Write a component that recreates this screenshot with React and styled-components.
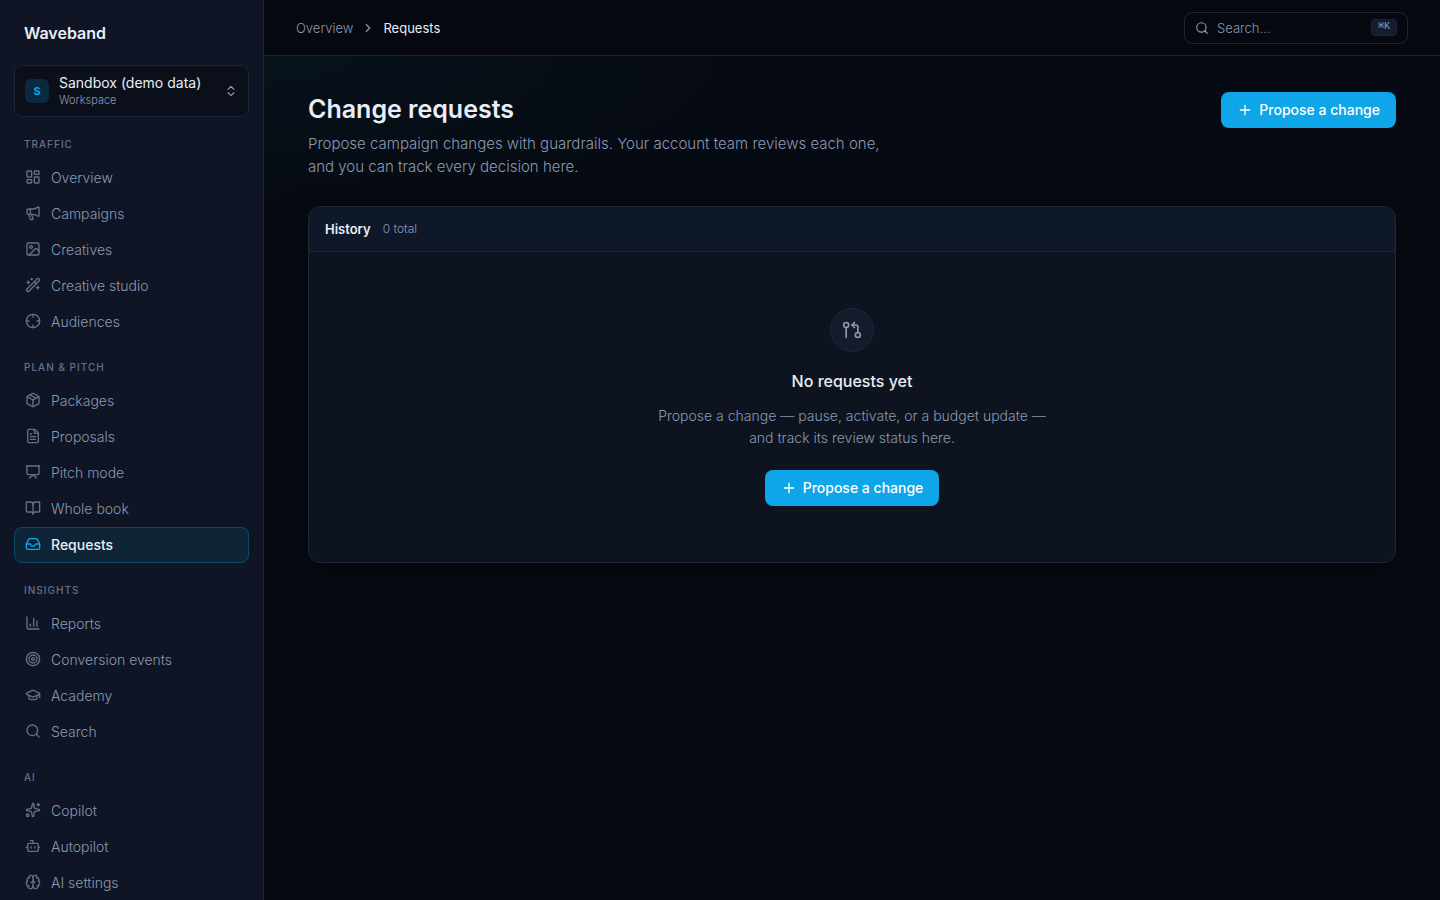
import styled, { createGlobalStyle } from "styled-components";
import {
  BookOpen,
  Bot,
  Brain,
  ChartColumn,
  ChevronRight,
  ChevronsUpDown,
  Crosshair,
  FileText,
  GitPullRequestArrow,
  GraduationCap,
  Image,
  Inbox,
  LayoutDashboard,
  Megaphone,
  Package,
  Plus,
  Presentation,
  Search,
  Sparkles,
  Target,
  WandSparkles,
} from "lucide-react";

const GlobalStyle = createGlobalStyle`
  :root {
    --bg: #060a12;
    --sidebar: #0f1524;
    --panel: #0d1420;
    --panel-header: #0f1828;
    --border: #1b2639;
    --text: #e8edf7;
    --muted: #8b99b3;
    --subtle: #64718a;
    --accent: #0ea5e9;
  }

  * {
    box-sizing: border-box;
  }

  body {
    margin: 0;
    background: var(--bg);
    color: var(--text);
    font-family: Inter, "Noto Sans", sans-serif;
    font-size: 14px;
    -webkit-font-smoothing: antialiased;
  }

  button,
  input {
    font: inherit;
    color: inherit;
  }

  h1, h2, h3, p, ul {
    margin: 0;
    padding: 0;
  }
`;

const Shell = styled.div`
  display: flex;
  height: 100vh;
  overflow: hidden;
`;

const Sidebar = styled.aside`
  flex: 0 0 264px;
  padding: 0 14px;
  overflow: hidden;
  background: var(--sidebar);
  border-right: 1px solid var(--border);
`;

const Brand = styled.div`
  padding: 21px 10px 20px;
  font-size: 16px;
  font-weight: 600;
  line-height: 24px;
`;

const WorkspaceButton = styled.button`
  display: flex;
  align-items: center;
  gap: 10px;
  width: 100%;
  height: 52px;
  padding: 0 10px;
  text-align: left;
  background: #0b0f1a;
  border: 1px solid var(--border);
  border-radius: 8px;
  cursor: pointer;

  svg {
    color: var(--muted);
  }
`;

const WorkspaceMark = styled.span`
  display: grid;
  place-items: center;
  width: 24px;
  height: 24px;
  border-radius: 6px;
  background: #0c2a3f;
  color: var(--accent);
  font-size: 11px;
  font-weight: 700;
`;

const WorkspaceText = styled.span`
  display: flex;
  flex: 1;
  flex-direction: column;
  font-size: 14px;
  line-height: 18px;
`;

const WorkspaceHint = styled.span`
  color: var(--muted);
  font-size: 11px;
  font-weight: 300;
  line-height: 16px;
`;

const GroupLabel = styled.h2`
  padding: 18px 10px 7px;
  color: var(--subtle);
  font-size: 10px;
  font-weight: 500;
  line-height: 18px;
  letter-spacing: 1px;
  text-transform: uppercase;
`;

const NavList = styled.ul`
  list-style: none;
`;

const NavLink = styled.a`
  display: flex;
  align-items: center;
  gap: 10px;
  height: 36px;
  padding: 0 10px 2px;
  border: 1px solid ${({ $active }) => ($active ? "#0c4a6b" : "transparent")};
  border-radius: 8px;
  background: ${({ $active }) => ($active ? "#0e2437" : "transparent")};
  color: ${({ $active }) => ($active ? "var(--text)" : "var(--muted)")};
  font-weight: ${({ $active }) => ($active ? 500 : 300)};
  text-decoration: none;

  svg {
    color: ${({ $active }) => ($active ? "var(--accent)" : "var(--subtle)")};
  }
`;

const Main = styled.div`
  display: flex;
  flex: 1;
  flex-direction: column;
  min-width: 0;
`;

const Topbar = styled.header`
  display: flex;
  align-items: center;
  justify-content: space-between;
  height: 56px;
  padding: 0 32px;
  background: #05080f;
  border-bottom: 1px solid var(--border);
`;

const Breadcrumbs = styled.nav`
  display: flex;
  align-items: center;
  gap: 8px;
  font-size: 13px;

  a {
    color: var(--muted);
    font-weight: 300;
    text-decoration: none;
  }

  svg {
    color: var(--muted);
  }
`;

const SearchBox = styled.label`
  display: flex;
  align-items: center;
  gap: 8px;
  width: 224px;
  height: 32px;
  padding: 0 10px;
  border: 1px solid var(--border);
  border-radius: 8px;
  color: var(--muted);
`;

const SearchInput = styled.input`
  flex: 1;
  min-width: 0;
  padding: 0;
  border: 0;
  outline: 0;
  background: transparent;
  font-size: 13px;
  font-weight: 300;

  &::placeholder {
    color: var(--muted);
    opacity: 1;
  }
`;

const Shortcut = styled.kbd`
  height: 17px;
  padding: 0 6px;
  border: 1px solid var(--border);
  border-radius: 4px;
  background: #141d30;
  font-family: "Liberation Mono", monospace;
  font-size: 10px;
  line-height: 14px;
`;

const Content = styled.main`
  flex: 1;
  padding: 36px 44px;
  background: radial-gradient(
    ellipse 500px 160px at 0 0,
    #07121b,
    transparent
  );
`;

const PageHeader = styled.div`
  display: flex;
  align-items: flex-start;
  justify-content: space-between;
  gap: 24px;
  margin-bottom: 28px;
`;

const Title = styled.h1`
  font-size: 25px;
  font-weight: 600;
  line-height: 34px;
`;

const Lead = styled.p`
  max-width: 600px;
  margin-top: 6px;
  color: var(--muted);
  font-size: 15px;
  font-weight: 300;
  line-height: 23px;
`;

const PrimaryButton = styled.button`
  display: inline-flex;
  align-items: center;
  gap: 6px;
  height: 36px;
  padding: 0 16px 1px;
  border: 0;
  border-radius: 8px;
  background: var(--accent);
  color: #fff;
  font-size: 14px;
  font-weight: 500;
  white-space: nowrap;
  cursor: pointer;
`;

const Card = styled.section`
  overflow: hidden;
  background: var(--panel);
  border: 1px solid var(--border);
  border-radius: 12px;
  box-shadow: 0 8px 32px rgba(0, 0, 0, 0.35);
`;

const CardHeader = styled.div`
  display: flex;
  align-items: center;
  gap: 12px;
  height: 45px;
  padding: 0 16px 1px;
  background: var(--panel-header);
  border-bottom: 1px solid var(--border);
`;

const CardTitle = styled.h2`
  font-size: 13px;
  font-weight: 600;
`;

const CardCount = styled.span`
  color: var(--muted);
  font-size: 12px;
  font-weight: 300;
`;

const EmptyState = styled.div`
  display: flex;
  flex-direction: column;
  align-items: center;
  padding: 56px 24px;
  text-align: center;
`;

const EmptyIcon = styled.div`
  display: grid;
  place-items: center;
  width: 44px;
  height: 44px;
  border: 1px solid var(--border);
  border-radius: 50%;
  background: #141b2b;
  color: var(--muted);
`;

const EmptyTitle = styled.h3`
  margin-top: 16px;
  font-size: 16px;
  font-weight: 500;
  line-height: 26px;
`;

const EmptyText = styled.p`
  max-width: 400px;
  margin: 11px 0 21px;
  color: var(--muted);
  font-size: 14px;
  font-weight: 300;
  line-height: 22px;
`;

const navGroups = [
  {
    label: "Traffic",
    items: [
      { name: "Overview", icon: LayoutDashboard },
      { name: "Campaigns", icon: Megaphone },
      { name: "Creatives", icon: Image },
      { name: "Creative studio", icon: WandSparkles },
      { name: "Audiences", icon: Crosshair },
    ],
  },
  {
    label: "Plan & pitch",
    items: [
      { name: "Packages", icon: Package },
      { name: "Proposals", icon: FileText },
      { name: "Pitch mode", icon: Presentation },
      { name: "Whole book", icon: BookOpen },
      { name: "Requests", icon: Inbox },
    ],
  },
  {
    label: "Insights",
    items: [
      { name: "Reports", icon: ChartColumn },
      { name: "Conversion events", icon: Target },
      { name: "Academy", icon: GraduationCap },
      { name: "Search", icon: Search },
    ],
  },
  {
    label: "AI",
    items: [
      { name: "Copilot", icon: Sparkles },
      { name: "Autopilot", icon: Bot },
      { name: "AI settings", icon: Brain },
    ],
  },
];

const ProposeButton = () => (
  <PrimaryButton type="button">
    <Plus size={16} strokeWidth={2} />
    Propose a change
  </PrimaryButton>
);

const SideNav = ({ current }) => (
  <nav aria-label="Main">
    {navGroups.map(({ label, items }) => (
      <section key={label}>
        <GroupLabel>{label}</GroupLabel>
        <NavList>
          {items.map(({ name, icon: Icon }) => (
            <li key={name}>
              <NavLink
                href="#"
                $active={name === current}
                aria-current={name === current ? "page" : undefined}
              >
                <Icon size={16} strokeWidth={2} />
                {name}
              </NavLink>
            </li>
          ))}
        </NavList>
      </section>
    ))}
  </nav>
);

const App = () => {
  return (
    <>
      <GlobalStyle />
      <Shell>
        <Sidebar>
          <Brand>Waveband</Brand>
          <WorkspaceButton type="button">
            <WorkspaceMark>S</WorkspaceMark>
            <WorkspaceText>
              Sandbox (demo data)
              <WorkspaceHint>Workspace</WorkspaceHint>
            </WorkspaceText>
            <ChevronsUpDown size={14} />
          </WorkspaceButton>
          <SideNav current="Requests" />
        </Sidebar>
        <Main>
          <Topbar>
            <Breadcrumbs aria-label="Breadcrumb">
              <a href="#">Overview</a>
              <ChevronRight size={14} />
              <span aria-current="page">Requests</span>
            </Breadcrumbs>
            <SearchBox>
              <Search size={14} />
              <SearchInput type="search" placeholder="Search…" aria-label="Search" />
              <Shortcut>⌘K</Shortcut>
            </SearchBox>
          </Topbar>
          <Content>
            <PageHeader>
              <div>
                <Title>Change requests</Title>
                <Lead>
                  Propose campaign changes with guardrails. Your account team
                  reviews each one, and you can track every decision here.
                </Lead>
              </div>
              <ProposeButton />
            </PageHeader>
            <Card>
              <CardHeader>
                <CardTitle>History</CardTitle>
                <CardCount>0 total</CardCount>
              </CardHeader>
              <EmptyState>
                <EmptyIcon>
                  <GitPullRequestArrow size={20} strokeWidth={2} />
                </EmptyIcon>
                <EmptyTitle>No requests yet</EmptyTitle>
                <EmptyText>
                  Propose a change — pause, activate, or a budget update — and
                  track its review status here.
                </EmptyText>
                <ProposeButton />
              </EmptyState>
            </Card>
          </Content>
        </Main>
      </Shell>
    </>
  );
};

export default App;
